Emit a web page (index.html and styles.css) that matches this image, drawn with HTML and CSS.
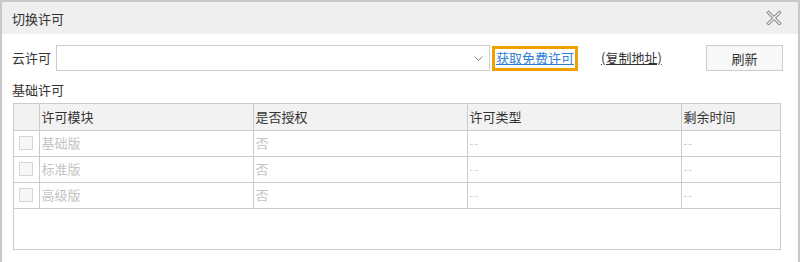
FILE: index.html
```html
<!DOCTYPE html>
<html>
<head>
<meta charset="UTF-8">
<title>切换许可</title>
<link rel="stylesheet" href="styles.css">
</head>
<body>
  <div class="dialog">
    <div class="dialog-head">
      <span class="dialog-title">切换许可</span>
      <a class="close" href="#" title="关闭">
        <svg width="16" height="16" viewBox="0 0 16 16">
          <path d="M1 2.6 2.6 1 8 6.4 13.4 1 15 2.6 9.6 8 15 13.4 13.4 15 8 9.6 2.6 15 1 13.4 6.4 8Z" fill="none" stroke="#666" stroke-width="1" stroke-linejoin="round"/>
        </svg>
      </a>
    </div>

    <div class="dialog-body">
      <div class="cloud-row">
        <label class="cloud-label">云许可</label>
        <div class="select">
          <svg class="chevron" width="9" height="5" viewBox="0 0 9 5">
            <path d="M0.5 0.5 4.5 4.5 8.5 0.5" fill="none" stroke="#888" stroke-width="1"/>
          </svg>
        </div>
        <a class="free-link" href="#">获取免费许可</a>
        <a class="copy-link" href="#">(复制地址)</a>
        <button class="btn">刷新</button>
      </div>

      <div class="section-title">基础许可</div>

      <div class="grid">
        <table>
          <thead>
            <tr>
              <th class="col-check"></th>
              <th class="col-wide">许可模块</th>
              <th class="col-wide">是否授权</th>
              <th class="col-wide">许可类型</th>
              <th class="col-last">剩余时间</th>
            </tr>
          </thead>
          <tbody>
            <tr>
              <td class="col-check"><span class="checkbox"></span></td>
              <td>基础版</td>
              <td>否</td>
              <td class="dash">--</td>
              <td class="dash">--</td>
            </tr>
            <tr>
              <td class="col-check"><span class="checkbox"></span></td>
              <td>标准版</td>
              <td>否</td>
              <td class="dash">--</td>
              <td class="dash">--</td>
            </tr>
            <tr>
              <td class="col-check"><span class="checkbox"></span></td>
              <td>高级版</td>
              <td>否</td>
              <td class="dash">--</td>
              <td class="dash">--</td>
            </tr>
          </tbody>
        </table>
      </div>
    </div>
  </div>
</body>
</html>
```

FILE: styles.css
```css
* {
  margin: 0;
  padding: 0;
  box-sizing: border-box;
}

body {
  margin: 0;
  background: #fff;
  font-family: "Noto Sans CJK SC", "Liberation Sans", sans-serif;
  font-size: 13px;
  color: #333;
}

.dialog {
  height: 262px;
  border: 2px solid #c8c8c8;
  border-bottom: none;
  background: #fff;
}

.dialog-head {
  height: 32px;
  background: #efefef;
  display: flex;
  align-items: center;
  justify-content: space-between;
  padding: 0 16px 0 10px;
}

.dialog-title {
  line-height: 20px;
  padding-top: 1px;
}

.close {
  display: flex;
  width: 16px;
  height: 16px;
}

.dialog-body {
  padding: 11px 15px 0 10px;
}

.cloud-row {
  display: flex;
  align-items: center;
  height: 26px;
}

.cloud-label {
  width: 44px;
  line-height: 20px;
}

.select {
  position: relative;
  width: 434px;
  height: 26px;
  border: 1px solid #ccc;
  background: #fff;
}

.chevron {
  position: absolute;
  right: 6px;
  top: 10px;
}

.free-link {
  margin-left: 2px;
  width: 86px;
  height: 25px;
  border: 3px solid #f0a000;
  color: #2f7fd4;
  text-decoration: underline;
  line-height: 18px;
  text-align: center;
  white-space: nowrap;
}

.copy-link {
  margin-left: 23px;
  color: #333;
  text-decoration: underline;
  line-height: 20px;
}

.btn {
  margin-left: auto;
  width: 77px;
  height: 26px;
  border: 1px solid #ccc;
  background: #f8f8f8;
  font-family: inherit;
  font-size: 13px;
  color: #333;
}

.section-title {
  margin-top: 9px;
  line-height: 20px;
}

.grid {
  margin: 3px 0 0 1px;
  width: 768px;
  height: 147px;
  border: 1px solid #ccc;
}

table {
  width: 100%;
  border-collapse: collapse;
  table-layout: fixed;
}

th, td {
  height: 26px;
  padding: 0 2px;
  text-align: left;
  font-weight: normal;
  line-height: 20px;
  border-right: 1px solid #ccc;
  border-bottom: 1px solid #ccc;
  white-space: nowrap;
}

th:last-child, td:last-child {
  border-right: none;
}

thead th {
  background: #f2f2f2;
  color: #333;
}

tbody td {
  color: #c4c4c4;
}

td.dash {
  color: #c8c8c8;
  font-size: 11px;
  letter-spacing: 1px;
}

.col-check {
  width: 25px;
  padding: 0;
}

.col-wide {
  width: 214px;
}

.checkbox {
  display: block;
  width: 14px;
  height: 14px;
  margin-left: 5px;
  border: 1px solid #d6d6d6;
  background: #f7f7f7;
}
```
